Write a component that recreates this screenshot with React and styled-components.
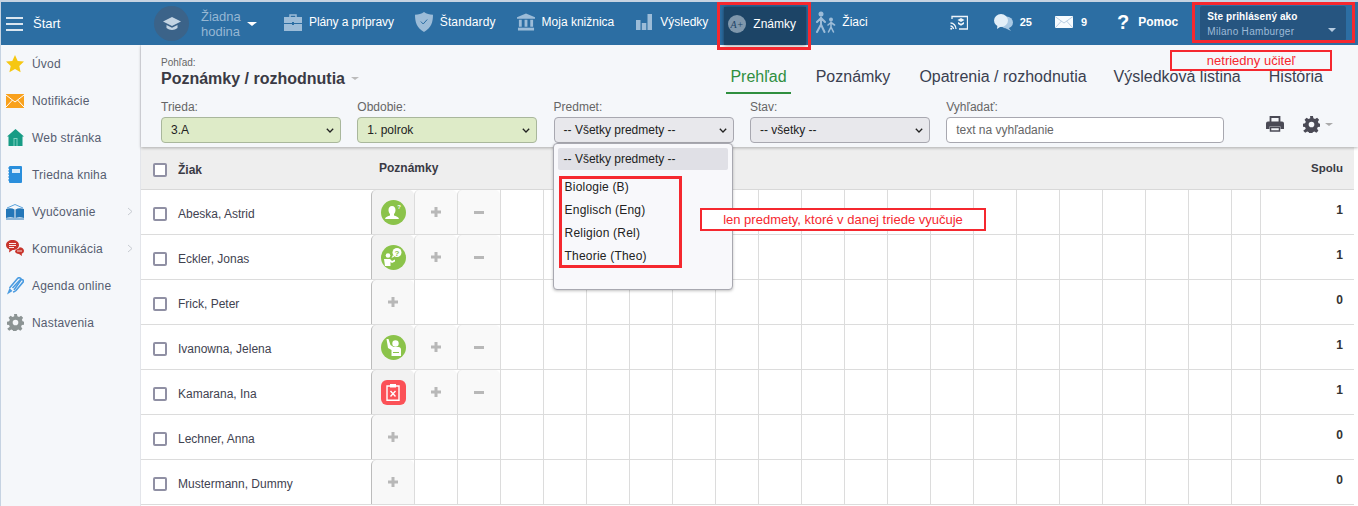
import React from 'react';
import styled, {createGlobalStyle} from 'styled-components';

const Global = createGlobalStyle`
  html, body { margin: 0; padding: 0; height: 100%; overflow: hidden; background: #fff; }
  body { font-family: "Liberation Sans", Arial, sans-serif; color: #3a3a44; }
  * { box-sizing: border-box; }
`;

const RED = '#f5282f';

const Page = styled.div`
  height: 506px;
  display: flex;
  flex-direction: column;
  padding-top: 2px;
  padding-left: 1px;
  background: #f5f7fa;
  box-shadow: inset 0 2px 0 #c6d3e2, inset 1px 0 0 #c6d3e2;
  overflow: hidden;
  position: relative;
`;

const TopBar = styled.header`
  height: 43px;
  flex: none;
  background: #2c6ea3;
  display: flex;
  align-items: center;
  padding-left: 5px;
  color: #fff;
  font-size: 12px;
  position: relative;
  z-index: 2;
  & > * { flex: none; }
`;
const Burger = styled.div`
  width: 17px;
  height: 14px;
  border-top: 2px solid #dbe6f0;
  border-bottom: 2px solid #dbe6f0;
  position: relative;
  &::after {
    content: '';
    position: absolute;
    left: 0;
    right: 0;
    top: 4px;
    height: 2px;
    background: #dbe6f0;
  }
`;
const Brand = styled.div`
  margin-left: 10px;
  width: 121px;
  font-size: 13px;
`;
const HourCircle = styled.div`
  width: 35px;
  height: 35px;
  border-radius: 50%;
  background: #3b6389;
  display: flex;
  align-items: center;
  justify-content: center;
`;
const HourText = styled.div`
  margin-left: 12px;
  width: 46px;
  color: #96b7d3;
  font-size: 13px;
  line-height: 15px;
`;
const NavItem = styled.div`
  display: flex;
  align-items: center;
  gap: ${p => p.$gap || 7}px;
  margin-left: ${p => p.$left || 0}px;
  padding-bottom: 3px;
  white-space: nowrap;
  font-size: ${p => p.$size || 12}px;
  font-weight: ${p => (p.$bold ? 700 : 400)};
  letter-spacing: ${p => p.$track || 0}px;
`;
const ActiveItem = styled(NavItem)`
  background: #1c4466;
  height: 38px;
  align-self: flex-end;
  width: 82px;
  padding-left: 4px;
  padding-bottom: 5px;
  position: relative;
  box-shadow: 0 0 4px rgba(0, 0, 0, .5);
`;
const Frame = styled.div`
  position: absolute;
  border: 3px solid ${RED};
  pointer-events: none;
  top: ${p => p.$top}px;
  left: ${p => p.$left}px;
  right: ${p => p.$right}px;
  bottom: ${p => p.$bottom}px;
`;
const Help = styled.span`
  font-size: 20px;
  font-weight: 700;
  line-height: 1;
`;
const UserBox = styled.div`
  margin-left: 22px;
  width: 146px;
  height: 35px;
  background: #265580;
  border-radius: 2px;
  position: relative;
  padding: 4px 7px;
  align-self: flex-start;
  margin-top: 4px;
  line-height: 14px;
`;
const UserTop = styled.div`
  font-size: 10px;
  font-weight: 700;
  letter-spacing: 0.1px;
`;
const UserName = styled.div`
  margin-top: 1px;
  font-size: 10px;
  color: #9dbbd8;
  letter-spacing: 0.3px;
`;
const UserCaret = styled.i`
  position: absolute;
  right: 10px;
  bottom: 9px;
  border: 4px solid transparent;
  border-top: 4px solid #b5cbe0;
  border-bottom: 0;
`;
const Caret = styled.i`
  display: block;
  border-left: ${p => p.$size}px solid transparent;
  border-right: ${p => p.$size}px solid transparent;
  border-top: ${p => p.$size - 1}px solid ${p => p.$color};
  margin-left: ${p => p.$left || 0}px;
`;

const Body = styled.div`
  flex: 1;
  display: flex;
  min-height: 0;
`;
const Sidebar = styled.nav`
  width: 140px;
  flex: none;
  border-right: 1px solid #e3e5ea;
`;
const SideItem = styled.div`
  height: 37px;
  display: flex;
  align-items: center;
  padding-left: 5px;
  gap: 8px;
  font-size: 12px;
  color: #555d70;
  letter-spacing: 0.2px;
  position: relative;
`;
const SideIcon = styled.div`
  width: 18px;
  height: 18px;
  display: flex;
  align-items: center;
  justify-content: center;
  flex: none;
`;
const SideArrow = styled.svg`
  position: absolute;
  right: 7px;
  top: 14px;
`;
const Main = styled.main`
  flex: 1;
  min-width: 0;
  background: #fff;
  position: relative;
`;
const Head = styled.section`
  height: 102px;
  background: #f5f7fa;
  padding: 12px 0 0 20px;
  box-shadow: 0 1px 3px rgba(0, 0, 0, .28);
  position: relative;
  z-index: 1;
`;
const TitleRow = styled.div`
  display: flex;
  justify-content: space-between;
  height: 37px;
`;
const Small = styled.div`
  font-size: 10px;
  color: #666;
  line-height: 11px;
`;
const Title = styled.div`
  display: flex;
  align-items: center;
  margin-top: 1px;
  font-size: 16px;
  font-weight: 700;
  color: #3a3a44;
  line-height: 19px;
`;
const Tabs = styled.div`
  display: flex;
  padding-right: 31px;
`;
const Tab = styled.div`
  height: 37px;
  padding: 11px 4px 0;
  margin-right: ${p => p.$right}px;
  font-size: 16px;
  white-space: nowrap;
  color: ${p => (p.$active ? '#2f8f3f' : '#3a4050')};
  border-bottom: 2px solid ${p => (p.$active ? '#2f8f3f' : 'transparent')};
`;
const Filters = styled.div`
  display: flex;
  gap: 16.3px;
  margin-top: 6px;
`;
const Field = styled.div`
  width: ${p => p.$w || 180}px;
  position: relative;
`;
const Label = styled.div`
  font-size: 12px;
  color: #666;
  line-height: 14px;
  margin-bottom: 3px;
`;
const Select = styled.div`
  height: 26px;
  border: 1px solid ${p => (p.$green ? '#a9b79c' : '#a8a8b0')};
  border-radius: 4px;
  background: ${p => (p.$green ? '#deebc8' : '#e8e8ec')};
  display: flex;
  align-items: center;
  justify-content: space-between;
  padding: 0 6px 0 9px;
  font-size: 12px;
  color: #222;
`;
const SearchBox = styled.div`
  height: 26px;
  border: 1px solid #a8a8b0;
  border-radius: 4px;
  background: #fff;
  display: flex;
  align-items: center;
  padding-left: 9px;
  font-size: 12px;
  color: #666;
`;
const Tools = styled.div`
  display: flex;
  align-items: center;
  margin-left: 26px;
  margin-top: 11px;
  height: 26px;
`;
const GearSlot = styled.div`
  display: flex;
  margin-left: 19px;
`;
const Dropdown = styled.div`
  position: absolute;
  left: -1px;
  top: 43px;
  width: 180px;
  height: 147px;
  background: #f8f8fb;
  border: 1px solid #a8a8b0;
  border-radius: 4px;
  box-shadow: 0 1px 3px rgba(0, 0, 0, .25);
  padding: 4px;
  z-index: 5;
  font-size: 12px;
  color: #222;
`;
const DropHead = styled.div`
  height: 22px;
  background: #e0e0e6;
  border-radius: 2px;
  display: flex;
  align-items: center;
  padding-left: 6px;
`;
const DropList = styled.div`
  width: 123px;
  height: 92px;
  margin: 6px 0 0 1px;
  border: 3px solid ${RED};
`;
const DropOption = styled.div`
  height: 23px;
  line-height: 17px;
  padding-left: 3px;
  white-space: nowrap;
  letter-spacing: 0.2px;
`;
const Note = styled.div`
  position: absolute;
  border: 2px solid ${RED};
  color: ${RED};
  font-size: 13px;
  display: flex;
  align-items: center;
  justify-content: center;
  z-index: 6;
  left: ${p => p.$left}px;
  top: ${p => p.$top}px;
  width: ${p => p.$w}px;
  height: ${p => p.$h}px;
  background: ${p => (p.$clear ? 'transparent' : '#fff')};
`;

const TableHead = styled.div`
  height: 43px;
  background: #eeeeee;
  border-bottom: 1px solid #d8d8d8;
  display: grid;
  grid-template-columns: 230px 1fr auto;
  align-items: center;
  font-size: 12px;
  font-weight: 700;
  color: #3a3a44;
  margin-right: 4px;
`;
const HeadStudent = styled.div`
  display: flex;
  align-items: center;
  gap: 11px;
  padding: 4px 0 0 12px;
`;
const HeadCell = styled.div`
  padding: 0 11px 0 8px;
  margin-bottom: 1px;
`;
const SumHead = styled(HeadCell)`
  font-size: 11.5px;
`;
const Row = styled.div`
  height: 45px;
  display: grid;
  grid-template-columns: 230px repeat(20, 43px) 29px 1fr;
  border-bottom: 1px solid #dcdcdc;
  margin-right: 4px;
`;
const NameCell = styled.div`
  display: flex;
  align-items: center;
  gap: 11px;
  padding: 3px 0 0 12px;
  font-size: 12px;
  color: #3f4250;
`;
const Check = styled.input.attrs({type: 'checkbox'})`
  appearance: none;
  width: 14px;
  height: 14px;
  margin: 0;
  background: #fff;
  border: 2px solid #9090a4;
  border-radius: 2px;
  flex: none;
`;
const Cell = styled.div`
  border-left: 1px solid ${p => (p.$strong ? '#bcbcbc' : '#dcdcdc')};
  background: ${p => p.$bg || 'transparent'};
  border-radius: ${p => (p.$bg ? '5px 5px 0 0' : 0)};
  display: flex;
  align-items: center;
  justify-content: center;
`;
const Badge = styled.div`
  width: 25px;
  height: 25px;
  border-radius: ${p => (p.$red ? '6px' : '50%')};
  background: ${p => (p.$red ? '#fb5157' : '#8bc34a')};
  display: flex;
  align-items: center;
  justify-content: center;
`;
const Total = styled.div`
  border-left: 1px solid #dcdcdc;
  text-align: right;
  padding: 13px 11px 0 0;
  font-size: 12px;
  font-weight: 700;
  color: #333;
`;

const Star = () => (
  <svg width="18" height="18" viewBox="0 0 18 18"><path d="M9 0l2.700 5.900 6.300.7-4.700 4.300 1.300 6.300L9 14.100l-5.600 3.100 1.300-6.300L0 6.600l6.300-.7z" fill="#f6c712" /></svg>
);
const OrangeMail = () => (
  <svg width="18" height="14" viewBox="0 0 18 14"><rect width="18" height="14" fill="#f9a11c" /><path d="M0 1l9 7 9-7M0 13l6.500-7M18 13l-6.500-7" fill="none" stroke="#fff" strokeWidth="1" /></svg>
);
const House = () => (
  <svg width="17" height="17" viewBox="0 0 17 17"><path d="M8.500 0L17 7.500h-1.500V17h-14V7.500H0z" fill="#179c85" /><rect x="6.500" y="9" width="4" height="8" fill="#7fd0c0" /><rect x="7.500" y="10" width="2" height="7" fill="#179c85" /></svg>
);
const Notebook = () => (
  <svg width="14" height="17" viewBox="0 0 14 17"><rect x="1" width="13" height="17" rx="1" fill="#2a8fdc" /><rect x="4" y="3" width="8" height="4" fill="#d8ecfa" /><path d="M1 2h-1M1 5h-1M1 8h-1M1 11h-1M1 14h-1" stroke="#2a8fdc" /></svg>
);
const Book = () => (
  <svg width="18" height="16" viewBox="0 0 18 16"><path d="M1 4l8-3.500L17 4" fill="none" stroke="#5ba3dc" /><path d="M0 5c3-1 6-1 8.500.5V14C6 13 3 13 0 14zM18 5c-3-1-6-1-8.500.5V14c2.500-1 5.500-1 8.500 0z" fill="#2477b8" /><path d="M0 15h18" stroke="#2477b8" /></svg>
);
const RedChat = () => (
  <svg width="18" height="17" viewBox="0 0 18 17"><path d="M6.500 0C10 0 13 2 13 5s-3 5-6.500 5L3 12.500l.4-3C1.300 8.500 0 7 0 5c0-3 3-5 6.500-5z" fill="#c8352c" /><path d="M3 3.500h7M3 5.500h7M3 7.500h5" stroke="#fff" strokeWidth=".9" /><path d="M10 9.500c1.500-.2 3-1 3.500-2.300 2.500.2 4.500 1.500 4.500 3.500 0 1.500-1 2.500-2.300 3l.3 2.300-3-2c-2 0-3.700-1-4-2.500z" fill="#c8352c" /><path d="M11 11h5" stroke="#fff" strokeWidth=".8" /></svg>
);
const Pen = () => (
  <svg width="18" height="18" viewBox="0 0 18 18"><path d="M3.500 11L11.500 1.500c1.500-1.500 4-.5 3.500 1.500L8 13" fill="none" stroke="#4a9be0" strokeWidth="1.600" /><path d="M6.500 11L14 3c1.500-1.200 4-.2 3.400 1.600L10 13.500c-1 1-2 1.500-3 1.500" fill="none" stroke="#4a9be0" strokeWidth="1.600" /><path d="M3.500 11l3 3-5.500 3.500z" fill="#4a9be0" /></svg>
);
const Gear = ({size, color}) => (
  <svg width={size} height={size} viewBox="0 0 24 24">
    <path d="M10 0h4l.7 3.300 2.300 1 2.900-1.800 2.800 2.800L21 8l1 2.300 2 .7v4l-3.100.7-1 2.300 1.800 2.900-2.800 2.800-2.900-1.800-2.300 1-.7 3.100h-4l-.7-3.100-2.300-1-2.900 1.800-2.800-2.800L3.900 18l-1-2.300L0 15v-4l3-.7 1-2.300-1.800-2.700L5 2.500l2.900 1.800 2.300-1zM12 8a4 4 0 100 8 4 4 0 000-8z" fill={color} fillRule="evenodd" />
  </svg>
);
const Chevron = () => (
  <svg width="8" height="5" viewBox="0 0 8 5"><path d="M.8.800L4 4l3.200-3.200" fill="none" stroke="#222" strokeWidth="1.300" /></svg>
);
const Plus = () => (
  <svg width="10" height="10" viewBox="0 0 10 10"><path d="M3.500 0h3v3.500H10v3H6.500V10h-3V6.500H0v-3h3.500z" fill="#b8b8b8" /></svg>
);
const Minus = () => (
  <svg width="10" height="3" viewBox="0 0 10 3"><rect width="10" height="3" fill="#b8b8b8" /></svg>
);

const NAV = '#9cbcd8';
const Cap = () => (
  <svg width="18" height="14" viewBox="0 0 18 14"><path d="M9 0l9 4.500L9 9 0 4.500z" fill="#c3d4e3" /><path d="M3.500 8v3c3 2.500 8 2.500 11 0V8L9 10.800z" fill="#c3d4e3" /></svg>
);
const Briefcase = () => (
  <svg width="18" height="17" viewBox="0 0 18 17"><path d="M6 3V1h6v2" fill="none" stroke={NAV} strokeWidth="1.500" /><path d="M0 3h18v6H0z" fill={NAV} /><path d="M0 10h18v7H0z" fill={NAV} /><rect x="8" y="8" width="2" height="3" fill="#2c6ea3" /></svg>
);
const Shield = () => (
  <svg width="18" height="20" viewBox="0 0 18 20"><path d="M9 0c2.500 1.800 5.500 2.600 9 2.800 0 7-1.500 13-9 17.200C1.500 15.800 0 9.800 0 2.800 3.500 2.600 6.500 1.800 9 0z" fill={NAV} /><path d="M5.800 9.500l2.400 2.500 4-4.500" fill="none" stroke="#2c6ea3" strokeWidth="1" /></svg>
);
const Bank = () => (
  <svg width="18" height="18" viewBox="0 0 19 18"><path d="M9.500 0L19 4v1.500H0V4z" fill={NAV} /><path d="M2 6.500h3V14H2zM8 6.500h3V14H8zM14 6.500h3V14h-3z" fill={NAV} /><path d="M1 15h17v3H1z" fill={NAV} /></svg>
);
const Bars = () => (
  <svg width="16" height="16" viewBox="0 0 16 16"><path d="M0 6h4.500v10H0zM5.800 9h4.500v7H5.800zM11.500 0H16v16h-4.500z" fill={NAV} /></svg>
);
const Grade = () => (
  <svg width="18" height="18" viewBox="0 0 18 18"><circle cx="9" cy="9" r="9" fill="#7f97ac" /><text x="9" y="12.500" fontSize="10" fontStyle="italic" textAnchor="middle" fill="#1c4466" fontFamily="Liberation Serif, serif">A+</text></svg>
);
const Walkers = () => (
  <svg width="21" height="22" viewBox="0 0 21 22" fill="none" stroke={NAV} strokeWidth="2" strokeLinecap="round"><circle cx="6" cy="3" r="2.500" fill={NAV} stroke="none" /><path d="M6 6.500v7L2 21M6 13.500l3.500 7.500M6 7L2 11M6 7l4 4" /><circle cx="16" cy="8.500" r="2" fill={NAV} stroke="none" /><path d="M16 11v5l-2.500 5M16 16l2.500 5M16 11.500l-3 2.500M16 11.500l3.500 2.500" strokeWidth="1.600" /></svg>
);
const Cast = () => (
  <svg width="18" height="15" viewBox="0 0 18 15" fill="none" stroke="#eef4f9"><path d="M2 4V1.500h15.500v12.500H9" strokeWidth="1.300" /><path d="M.5 8c3 0 5.500 2.500 5.500 6M.5 11c1.500 0 3 1.500 3 3" strokeWidth="1.300" /><circle cx="1.200" cy="13.800" r="1" fill="#eef4f9" stroke="none" /><path d="M11 3l3.500 2L11 7 7.500 5z" fill="#eef4f9" stroke="none" /><path d="M8 7l3 1.700L14 7v2l-3 1.700L8 9z" fill="#eef4f9" stroke="none" /></svg>
);
const Chat = () => (
  <svg width="19" height="17" viewBox="0 0 19 17"><ellipse cx="12.500" cy="8.500" rx="6.500" ry="6" fill="#a9c9e4" /><path d="M14 13l3 4-5-2.500z" fill="#a9c9e4" /><ellipse cx="7" cy="6.500" rx="7" ry="6.500" fill="#e3eff8" /><path d="M3.500 11l-.5 4 4.500-3z" fill="#e3eff8" /></svg>
);
const WhiteMail = () => (
  <svg width="18" height="12" viewBox="0 0 18 12"><rect width="18" height="12" fill="#f7fbfe" /><path d="M0 .5l9 6.500 9-6.500M0 12l6.500-7M18 12l-6.500-7" fill="none" stroke="#a9c3da" strokeWidth=".8" /></svg>
);
const Printer = () => (
  <svg width="18" height="16" viewBox="0 0 18 16"><path d="M4.500 6V1h9v5" fill="none" stroke="#4a4a55" strokeWidth="1.800" /><path d="M2 5.500h14a2 2 0 012 2V13h-3.500v-2.500h-11V13H0V7.500a2 2 0 012-2z" fill="#4a4a55" /><rect x="4.500" y="11.500" width="9" height="3.500" fill="none" stroke="#4a4a55" strokeWidth="1.500" /></svg>
);
const QuestionPerson = () => (
  <svg width="17" height="17" viewBox="0 0 17 17"><path d="M7 2c2.300 0 3.500 1.800 3.500 4 0 1.500-.6 3-1.500 4v1.500c2 .8 4.500 1.200 5 3.500H0c.5-2.300 3-2.700 5-3.500V10C4.100 9 3.500 7.500 3.500 6 3.500 3.800 4.700 2 7 2z" fill="#fff" /><text x="14" y="5" fontSize="6" fontWeight="700" fill="#fff" textAnchor="middle">?</text></svg>
);
const SpeakerAsk = () => (
  <svg width="19" height="18" viewBox="0 0 19 18"><circle cx="4" cy="7.500" r="2.300" fill="#fff" /><path d="M0 11h6l2 2 3-1.500v2l-3 1.500-1.500-1V18H1z" fill="#fff" /><circle cx="13" cy="4.500" r="4.500" fill="#fff" /><text x="13" y="7.500" fontSize="8" fontWeight="700" fill="#8bc34a" textAnchor="middle">?</text><path d="M9 7l-1.500 3 3-1.500z" fill="#fff" /></svg>
);
const RaisedHand = () => (
  <svg width="17" height="18" viewBox="0 0 17 18"><circle cx="10.500" cy="5.500" r="3.200" fill="#fff" /><path d="M1.500 1l2 .0 2 6 3 2h5c1.500 0 2.500 1 2.500 2.500V18H6.500v-6L3 10z" fill="#fff" /><rect x="8" y="14" width="6" height="1" fill="#8bc34a" /></svg>
);
const Clipboard = () => (
  <svg width="14" height="18" viewBox="0 0 14 18"><path d="M1 3h12v14.300H1z" fill="none" stroke="#fff" strokeWidth="1.400" /><rect x="4" y="1" width="6" height="3.500" fill="#fff" /><path d="M4.500 8l5 5.500M9.500 8l-5 5.500" stroke="#fff" strokeWidth="1.400" /></svg>
);

const navLinks = [
  {key: 'plans', label: 'Plány a prípravy', icon: <Briefcase />, left: 27, track: -0.12},
  {key: 'std', label: 'Štandardy', icon: <Shield />, left: 21, track: 0.12},
  {key: 'lib', label: 'Moja knižnica', icon: <Bank />, left: 21},
  {key: 'res', label: 'Výsledky', icon: <Bars />, left: 22, gap: 8},
];

const sideLinks = [
  {label: 'Úvod', icon: <Star />},
  {label: 'Notifikácie', icon: <OrangeMail />},
  {label: 'Web stránka', icon: <House />},
  {label: 'Triedna kniha', icon: <Notebook />},
  {label: 'Vyučovanie', icon: <Book />, more: true},
  {label: 'Komunikácia', icon: <RedChat />, more: true},
  {label: 'Agenda online', icon: <Pen />},
  {label: 'Nastavenia', icon: <Gear size={17} color="#8c9494" />},
];

const students = [
  {name: 'Abeska, Astrid', badge: <QuestionPerson />, total: 1},
  {name: 'Eckler, Jonas', badge: <SpeakerAsk />, total: 1},
  {name: 'Frick, Peter', total: 0},
  {name: 'Ivanowna, Jelena', badge: <RaisedHand />, total: 1},
  {name: 'Kamarana, Ina', badge: <Clipboard />, red: true, total: 1},
  {name: 'Lechner, Anna', total: 0},
  {name: 'Mustermann, Dummy', total: 0},
];

const blanks = Array.from({length: 18});

const StudentRow = ({student}) => {
  const graded = Boolean(student.badge);
  return (
    <Row>
      <NameCell><Check />{student.name}</NameCell>
      <Cell $strong $bg={graded ? '#f2f2f2' : '#f8f8f8'}>
        {graded ? <Badge $red={student.red}>{student.badge}</Badge> : <Plus />}
      </Cell>
      <Cell $bg={graded ? '#f9f9f9' : undefined}>{graded && <Plus />}</Cell>
      <Cell $bg={graded ? '#f9f9f9' : undefined}>{graded && <Minus />}</Cell>
      {blanks.map((_, i) => <Cell key={i} />)}
      <Total>{student.total}</Total>
    </Row>
  );
};

const App = () => (
  <Page>
    <Global />
    <TopBar>
      <Burger />
      <Brand>Štart</Brand>
      <HourCircle><Cap /></HourCircle>
      <HourText>Žiadna hodina</HourText>
      <Caret $size={5} $color="#fff" />
      {navLinks.map(link => (
        <NavItem key={link.key} $left={link.left} $track={link.track} $gap={link.gap}>{link.icon}{link.label}</NavItem>
      ))}
      <ActiveItem $left={16}>
        <Grade />Známky
        <Frame $top={-5} $left={-7} $right={-5} $bottom={-5} />
      </ActiveItem>
      <NavItem $left={9} $gap={6}><Walkers />Žiaci</NavItem>
      <NavItem $left={82}><Cast /></NavItem>
      <NavItem $left={26} $bold $size={11}><Chat />25</NavItem>
      <NavItem $left={23} $bold $gap={8} $size={11}><WhiteMail />9</NavItem>
      <NavItem $left={30} $bold $gap={9}><Help>?</Help>Pomoc</NavItem>
      <UserBox>
        <UserTop>Ste prihlásený ako</UserTop>
        <UserName>Milano Hamburger</UserName>
        <UserCaret />
        <Frame $top={-4} $left={-8} $right={-9} $bottom={-2} />
      </UserBox>
    </TopBar>
    <Body>
      <Sidebar>
        {sideLinks.map(link => (
          <SideItem key={link.label}>
            <SideIcon>{link.icon}</SideIcon>
            {link.label}
            {link.more && (
              <SideArrow width="6" height="9" viewBox="0 0 6 9"><path d="M1 1l4 3.500L1 8" fill="none" stroke="#c8ccd2" /></SideArrow>
            )}
          </SideItem>
        ))}
      </Sidebar>
      <Main>
        <Head>
          <TitleRow>
            <div>
              <Small>Pohľad:</Small>
              <Title>Poznámky / rozhodnutia<Caret $size={4} $color="#bbb" $left={6} /></Title>
            </div>
            <Tabs>
              <Tab $active $right={21}>Prehľad</Tab>
              <Tab $right={21}>Poznámky</Tab>
              <Tab $right={19}>Opatrenia / rozhodnutia</Tab>
              <Tab $right={20}>Výsledková listina</Tab>
              <Tab>História</Tab>
            </Tabs>
          </TitleRow>
          <Filters>
            <Field><Label>Trieda:</Label><Select $green>3.A<Chevron /></Select></Field>
            <Field><Label>Obdobie:</Label><Select $green>1. polrok<Chevron /></Select></Field>
            <Field>
              <Label>Predmet:</Label>
              <Select>-- Všetky predmety --<Chevron /></Select>
              <Dropdown>
                <DropHead>-- Všetky predmety --</DropHead>
                <DropList>
                  <DropOption>Biologie (B)</DropOption>
                  <DropOption>Englisch (Eng)</DropOption>
                  <DropOption>Religion (Rel)</DropOption>
                  <DropOption>Theorie (Theo)</DropOption>
                </DropList>
              </Dropdown>
            </Field>
            <Field><Label>Stav:</Label><Select>-- všetky --<Chevron /></Select></Field>
            <Field $w={278}><Label>Vyhľadať:</Label><SearchBox>text na vyhľadanie</SearchBox></Field>
            <Tools>
              <Printer />
              <GearSlot><Gear size={17} color="#4a4a55" /></GearSlot>
              <Caret $size={4} $color="#aaa" $left={5} />
            </Tools>
          </Filters>
        </Head>
        <TableHead>
          <HeadStudent><Check />Žiak</HeadStudent>
          <HeadCell>Poznámky</HeadCell>
          <SumHead>Spolu</SumHead>
        </TableHead>
        {students.map(s => <StudentRow key={s.name} student={s} />)}
        <Note $left={1029} $top={5} $w={162} $h={21} $clear>netriedny učiteľ</Note>
        <Note $left={559} $top={163} $w={286} $h={23}>len predmety, ktoré v danej triede vyučuje</Note>
      </Main>
    </Body>
  </Page>
);

export default App;
